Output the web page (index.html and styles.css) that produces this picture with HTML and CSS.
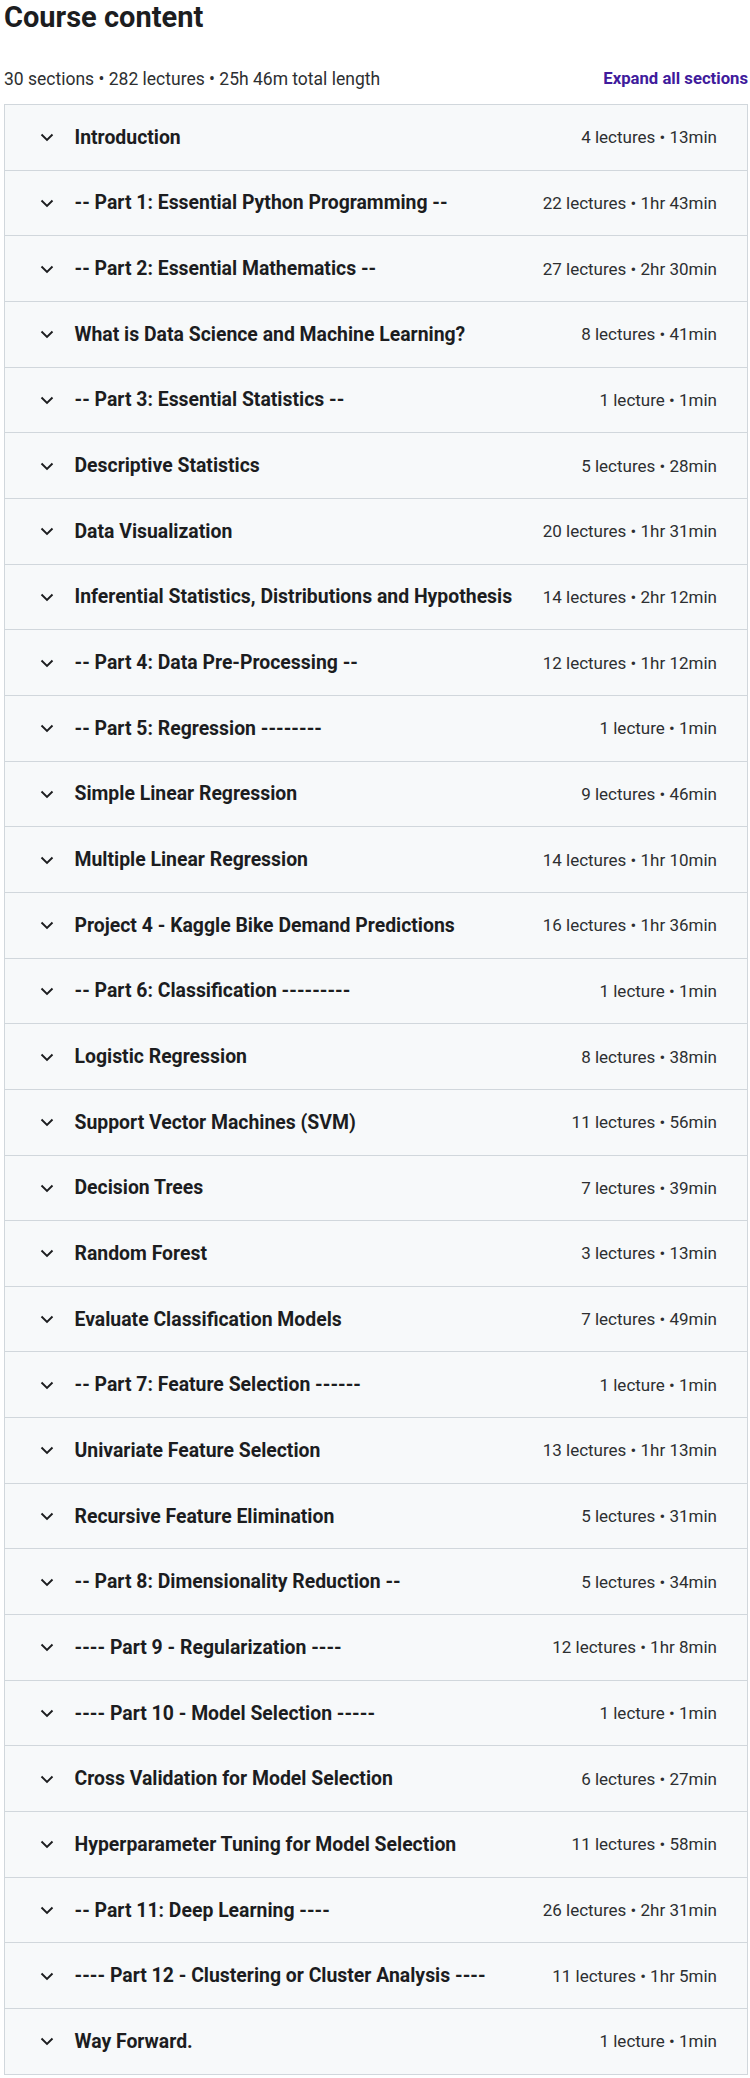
FILE: index.html
```html
<!DOCTYPE html>
<html lang="en">
<head>
<meta charset="utf-8">
<title>Course content</title>
<link rel="stylesheet" href="styles.css">
</head>
<body>
<div class="page">
  <h2 class="title">Course content</h2>
  <div class="meta">
    <span class="stats">30 sections • 282 lectures • 25h 46m total length</span>
    <button class="expand">Expand all sections</button>
  </div>
  <div class="sections">
    <div class="row"><svg class="chev" viewBox="0 0 14 14"><path d="M1.5 4.5 L7 10 L12.5 4.5"/></svg><span class="name">Introduction</span><span class="info">4 lectures • 13min</span></div>
    <div class="row"><svg class="chev" viewBox="0 0 14 14"><path d="M1.5 4.5 L7 10 L12.5 4.5"/></svg><span class="name">-- Part 1: Essential Python Programming --</span><span class="info">22 lectures • 1hr 43min</span></div>
    <div class="row"><svg class="chev" viewBox="0 0 14 14"><path d="M1.5 4.5 L7 10 L12.5 4.5"/></svg><span class="name">-- Part 2: Essential Mathematics --</span><span class="info">27 lectures • 2hr 30min</span></div>
    <div class="row"><svg class="chev" viewBox="0 0 14 14"><path d="M1.5 4.5 L7 10 L12.5 4.5"/></svg><span class="name">What is Data Science and Machine Learning?</span><span class="info">8 lectures • 41min</span></div>
    <div class="row"><svg class="chev" viewBox="0 0 14 14"><path d="M1.5 4.5 L7 10 L12.5 4.5"/></svg><span class="name">-- Part 3: Essential Statistics --</span><span class="info">1 lecture • 1min</span></div>
    <div class="row"><svg class="chev" viewBox="0 0 14 14"><path d="M1.5 4.5 L7 10 L12.5 4.5"/></svg><span class="name">Descriptive Statistics</span><span class="info">5 lectures • 28min</span></div>
    <div class="row"><svg class="chev" viewBox="0 0 14 14"><path d="M1.5 4.5 L7 10 L12.5 4.5"/></svg><span class="name">Data Visualization</span><span class="info">20 lectures • 1hr 31min</span></div>
    <div class="row"><svg class="chev" viewBox="0 0 14 14"><path d="M1.5 4.5 L7 10 L12.5 4.5"/></svg><span class="name">Inferential Statistics, Distributions and Hypothesis</span><span class="info">14 lectures • 2hr 12min</span></div>
    <div class="row"><svg class="chev" viewBox="0 0 14 14"><path d="M1.5 4.5 L7 10 L12.5 4.5"/></svg><span class="name">-- Part 4: Data Pre-Processing --</span><span class="info">12 lectures • 1hr 12min</span></div>
    <div class="row"><svg class="chev" viewBox="0 0 14 14"><path d="M1.5 4.5 L7 10 L12.5 4.5"/></svg><span class="name">-- Part 5: Regression --------</span><span class="info">1 lecture • 1min</span></div>
    <div class="row"><svg class="chev" viewBox="0 0 14 14"><path d="M1.5 4.5 L7 10 L12.5 4.5"/></svg><span class="name">Simple Linear Regression</span><span class="info">9 lectures • 46min</span></div>
    <div class="row"><svg class="chev" viewBox="0 0 14 14"><path d="M1.5 4.5 L7 10 L12.5 4.5"/></svg><span class="name">Multiple Linear Regression</span><span class="info">14 lectures • 1hr 10min</span></div>
    <div class="row"><svg class="chev" viewBox="0 0 14 14"><path d="M1.5 4.5 L7 10 L12.5 4.5"/></svg><span class="name">Project 4 - Kaggle Bike Demand Predictions</span><span class="info">16 lectures • 1hr 36min</span></div>
    <div class="row"><svg class="chev" viewBox="0 0 14 14"><path d="M1.5 4.5 L7 10 L12.5 4.5"/></svg><span class="name">-- Part 6: Classification ---------</span><span class="info">1 lecture • 1min</span></div>
    <div class="row"><svg class="chev" viewBox="0 0 14 14"><path d="M1.5 4.5 L7 10 L12.5 4.5"/></svg><span class="name">Logistic Regression</span><span class="info">8 lectures • 38min</span></div>
    <div class="row"><svg class="chev" viewBox="0 0 14 14"><path d="M1.5 4.5 L7 10 L12.5 4.5"/></svg><span class="name">Support Vector Machines (SVM)</span><span class="info">11 lectures • 56min</span></div>
    <div class="row"><svg class="chev" viewBox="0 0 14 14"><path d="M1.5 4.5 L7 10 L12.5 4.5"/></svg><span class="name">Decision Trees</span><span class="info">7 lectures • 39min</span></div>
    <div class="row"><svg class="chev" viewBox="0 0 14 14"><path d="M1.5 4.5 L7 10 L12.5 4.5"/></svg><span class="name">Random Forest</span><span class="info">3 lectures • 13min</span></div>
    <div class="row"><svg class="chev" viewBox="0 0 14 14"><path d="M1.5 4.5 L7 10 L12.5 4.5"/></svg><span class="name">Evaluate Classification Models</span><span class="info">7 lectures • 49min</span></div>
    <div class="row"><svg class="chev" viewBox="0 0 14 14"><path d="M1.5 4.5 L7 10 L12.5 4.5"/></svg><span class="name">-- Part 7: Feature Selection ------</span><span class="info">1 lecture • 1min</span></div>
    <div class="row"><svg class="chev" viewBox="0 0 14 14"><path d="M1.5 4.5 L7 10 L12.5 4.5"/></svg><span class="name">Univariate Feature Selection</span><span class="info">13 lectures • 1hr 13min</span></div>
    <div class="row"><svg class="chev" viewBox="0 0 14 14"><path d="M1.5 4.5 L7 10 L12.5 4.5"/></svg><span class="name">Recursive Feature Elimination</span><span class="info">5 lectures • 31min</span></div>
    <div class="row"><svg class="chev" viewBox="0 0 14 14"><path d="M1.5 4.5 L7 10 L12.5 4.5"/></svg><span class="name">-- Part 8: Dimensionality Reduction --</span><span class="info">5 lectures • 34min</span></div>
    <div class="row"><svg class="chev" viewBox="0 0 14 14"><path d="M1.5 4.5 L7 10 L12.5 4.5"/></svg><span class="name">---- Part 9 - Regularization ----</span><span class="info">12 lectures • 1hr 8min</span></div>
    <div class="row"><svg class="chev" viewBox="0 0 14 14"><path d="M1.5 4.5 L7 10 L12.5 4.5"/></svg><span class="name">---- Part 10 - Model Selection -----</span><span class="info">1 lecture • 1min</span></div>
    <div class="row"><svg class="chev" viewBox="0 0 14 14"><path d="M1.5 4.5 L7 10 L12.5 4.5"/></svg><span class="name">Cross Validation for Model Selection</span><span class="info">6 lectures • 27min</span></div>
    <div class="row"><svg class="chev" viewBox="0 0 14 14"><path d="M1.5 4.5 L7 10 L12.5 4.5"/></svg><span class="name">Hyperparameter Tuning for Model Selection</span><span class="info">11 lectures • 58min</span></div>
    <div class="row"><svg class="chev" viewBox="0 0 14 14"><path d="M1.5 4.5 L7 10 L12.5 4.5"/></svg><span class="name">-- Part 11: Deep Learning ----</span><span class="info">26 lectures • 2hr 31min</span></div>
    <div class="row"><svg class="chev" viewBox="0 0 14 14"><path d="M1.5 4.5 L7 10 L12.5 4.5"/></svg><span class="name">---- Part 12 - Clustering or Cluster Analysis ----</span><span class="info">11 lectures • 1hr 5min</span></div>
    <div class="row"><svg class="chev" viewBox="0 0 14 14"><path d="M1.5 4.5 L7 10 L12.5 4.5"/></svg><span class="name">Way Forward.</span><span class="info">1 lecture • 1min</span></div>
  </div>
</div>
</body>
</html>
```

FILE: styles.css
```css
* { box-sizing: border-box; }
html, body { margin: 0; padding: 0; background: #ffffff; }
body {
  font-family: Roboto, "Liberation Sans", Arial, sans-serif;
  color: #1c1d1f;
}
.page {
  width: 750px;
  padding: 0 2px 0 4px;
}
.title {
  margin: 0;
  font-size: 29px;
  line-height: 34px;
  font-weight: 700;
  color: #1c1d1f;
}
.meta {
  display: flex;
  justify-content: space-between;
  align-items: center;
  height: 20px;
  margin: 35px 0 15px;
}
.stats {
  font-size: 17.5px;
  line-height: 20px;
  color: #2d2f31;
}
.expand {
  border: 0;
  background: none;
  padding: 0;
  font-family: inherit;
  font-size: 16.7px;
  line-height: 20px;
  font-weight: 700;
  color: #401b9c;
  cursor: pointer;
}
.sections {
  border: 1px solid #d1d7dc;
  background: #f7f9fa;
}
.row {
  display: flex;
  align-items: center;
  height: 64.67px;
  padding: 0 30px 0 35px;
}
.row + .row { border-top: 1px solid #d1d7dc; height: 65.67px; }
.chev {
  width: 14px;
  height: 14px;
  flex: none;
  margin-right: 20.5px;
  fill: none;
  stroke: #1c1d1f;
  stroke-width: 1.9;
}
.name {
  flex: 1;
  font-size: 19.4px;
  font-weight: 700;
  color: #1c1d1f;
  white-space: nowrap;
}
.info {
  font-size: 17px;
  color: #2d2f31;
  white-space: nowrap;
  margin-left: 16px;
}
```
